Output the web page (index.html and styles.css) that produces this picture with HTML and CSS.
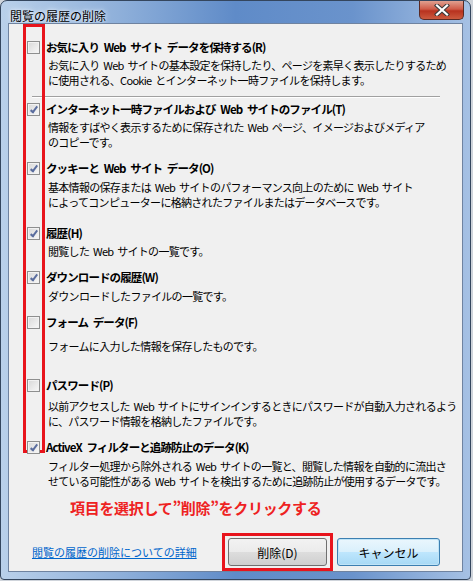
FILE: index.html
```html
<!DOCTYPE html>
<html lang="ja">
<head>
  <meta charset="UTF-8">
  <title>閲覧の履歴の削除</title>
  <link rel="stylesheet" href="styles.css">
</head>
<body>
  <div class="window">
    <div class="titlebar">
      <span class="caption">閲覧の履歴の削除</span>
      <span class="close">
        <svg width="16" height="12" viewBox="0 0 16 12">
          <path d="M3 1.5 L13 10.5 M13 1.5 L3 10.5" stroke="#3a3a3a" stroke-width="4.2" stroke-linecap="square"/>
          <path d="M3 1.5 L13 10.5 M13 1.5 L3 10.5" stroke="#ffffff" stroke-width="2.2" stroke-linecap="square"/>
        </svg>
      </span>
    </div>

    <div class="client">
      <div class="mark-column"></div>

      <div class="item">
        <span class="check"></span>
        <div class="text">
          <div class="label">お気に入り Web サイト データを保持する(R)</div>
          <p class="desc">お気に入り Web サイトの基本設定を保持したり、ページを素早く表示したりするため<br>に使用される、Cookie とインターネット一時ファイルを保持します。</p>
        </div>
      </div>

      <div class="separator"></div>

      <div class="item first">
        <span class="check on"></span>
        <div class="text">
          <div class="label">インターネット一時ファイルおよび Web サイトのファイル(T)</div>
          <p class="desc">情報をすばやく表示するために保存された Web ページ、イメージおよびメディア<br>のコピーです。</p>
        </div>
      </div>

      <div class="item">
        <span class="check on"></span>
        <div class="text">
          <div class="label">クッキーと Web サイト データ(O)</div>
          <p class="desc loose">基本情報の保存または Web サイトのパフォーマンス向上のために Web サイト<br>によってコンピューターに格納されたファイルまたはデータベースです。</p>
        </div>
      </div>

      <div class="item wide">
        <span class="check on"></span>
        <div class="text">
          <div class="label">履歴(H)</div>
          <p class="desc">閲覧した Web サイトの一覧です。</p>
        </div>
      </div>

      <div class="item">
        <span class="check on"></span>
        <div class="text">
          <div class="label">ダウンロードの履歴(W)</div>
          <p class="desc loose">ダウンロードしたファイルの一覧です。</p>
        </div>
      </div>

      <div class="item">
        <span class="check"></span>
        <div class="text">
          <div class="label">フォーム データ(F)</div>
          <p class="desc far">フォームに入力した情報を保存したものです。</p>
        </div>
      </div>

      <div class="item widest">
        <span class="check"></span>
        <div class="text">
          <div class="label">パスワード(P)</div>
          <p class="desc mid">以前アクセスした Web サイトにサインインするときにパスワードが自動入力されるよう<br>に、パスワード情報を格納したファイルです。</p>
        </div>
      </div>

      <div class="item">
        <span class="check on"></span>
        <div class="text">
          <div class="label">ActiveX フィルターと追跡防止のデータ(K)</div>
          <p class="desc loose">フィルター処理から除外される Web サイトの一覧と、閲覧した情報を自動的に流出さ<br>せている可能性がある Web サイトを検出するために追跡防止が使用するデータです。</p>
        </div>
      </div>

      <p class="note">項目を選択して”削除”をクリックする</p>

      <div class="actions">
        <a class="help" href="#">閲覧の履歴の削除についての詳細</a>
        <span class="highlight"><button class="btn">削除(D)</button></span>
        <button class="btn default">キャンセル</button>
      </div>
    </div>
  </div>
</body>
</html>
```

FILE: styles.css
```css
body {
  margin: 0;
  background: #cfd4db;
  font-family: "Noto Sans CJK JP", "Noto Sans", sans-serif;
  color: #000;
}
.window {
  width: 469px;
  height: 578px;
  border: 1px solid #34465e;
  border-radius: 7px 7px 4px 4px;
  background: linear-gradient(to right, #b9d0ea 0%, #8fb0da 25%, #5f8bc8 50%, #6a93cc 75%, #a6c1e4 100%);
  display: flex;
  flex-direction: column;
}
.titlebar {
  height: 27px;
  display: flex;
  align-items: flex-start;
  padding: 0 6px 0 9px;
}
.caption {
  font-size: 12px;
  line-height: 14px;
  margin-top: 8px;
  text-shadow: 0 0 6px #e8f0fa, 0 0 3px #e8f0fa;
}
.close {
  margin-left: auto;
  width: 43px;
  height: 18px;
  border: 1px solid #5a2a24;
  border-top: none;
  border-radius: 0 0 5px 5px;
  background: linear-gradient(#e0a090 0%, #cf5b48 45%, #b8321f 55%, #cc5a3e 100%);
  display: flex;
  align-items: center;
  justify-content: center;
}
.client {
  position: relative;
  margin: 0 7px 8px 7px;
  flex: 1;
  background: #f0f0f0;
  border: 1px solid #6f83a0;
  padding: 5px 22px 0 18px;
}
.mark-column {
  position: absolute;
  left: 14px;
  top: 0;
  width: 16px;
  height: 423px;
  border: 3px solid #e8141c;
}
.item {
  display: flex;
  gap: 6px;
  margin-top: 10px;
}
.item:first-of-type {
  margin-top: 0;
}
.item.first {
  margin-top: 3px;
}
.item.wide {
  margin-top: 15px;
}
.item.widest {
  margin-top: 23px;
}
.check {
  flex: none;
  width: 11px;
  height: 11px;
  margin-top: 2px;
  border: 1px solid #8e8f8f;
  background: linear-gradient(135deg, #d8d8d8, #f8f8f8);
  box-shadow: inset 0 0 0 1px #f2f2f2;
  position: relative;
}
.check.on::after {
  content: "";
  position: absolute;
  left: 4px;
  top: 1px;
  width: 2px;
  height: 6px;
  border: solid #5a6d9e;
  border-width: 0 2px 2px 0;
  transform: rotate(38deg);
}
.label {
  font-size: 11.5px;
  line-height: 16px;
  font-weight: bold;
  letter-spacing: -0.9px;
  word-spacing: 3px;
  white-space: nowrap;
}
.desc {
  margin: 3px 0 0;
  padding-left: 2px;
  font-size: 11px;
  line-height: 15px;
  letter-spacing: -0.7px;
  word-spacing: 2px;
  white-space: nowrap;
}
.desc.loose {
  margin-top: 4px;
}
.desc.mid {
  margin-top: 6px;
}
.desc.far {
  margin-top: 9px;
}
.separator {
  margin: 8px 0 0 5px;
  border-top: 1px solid #a0a0a0;
  border-bottom: 1px solid #fff;
}
.note {
  margin: 9px 0 0 43px;
  font-size: 15px;
  line-height: 20px;
  font-weight: bold;
  color: #ee2222;
  letter-spacing: -0.3px;
}
.actions {
  display: flex;
  align-items: center;
  margin-top: 15px;
}
.help {
  margin-left: 5px;
  font-size: 11px;
  color: #0066cc;
  text-decoration: underline;
}
.highlight {
  margin-left: auto;
  border: 3px solid #e8141c;
  padding: 2px 3px;
  display: flex;
}
.btn {
  width: 99px;
  height: 28px;
  border: 1px solid #707070;
  border-radius: 3px;
  background: linear-gradient(#f2f2f2 0%, #ebebeb 50%, #dddddd 51%, #cfcfcf 100%);
  font-family: "Noto Sans CJK JP", "Noto Sans", sans-serif;
  font-size: 12px;
  color: #000;
  padding: 0;
}
.btn.default {
  width: 103px;
  margin-left: 4px;
  border-color: #3c7fb1;
  background: linear-gradient(#eaf6fd 0%, #d9f0fc 50%, #bee6fd 51%, #a7d9f5 100%);
  box-shadow: inset 0 0 0 1px #bfe4f7;
}
```
